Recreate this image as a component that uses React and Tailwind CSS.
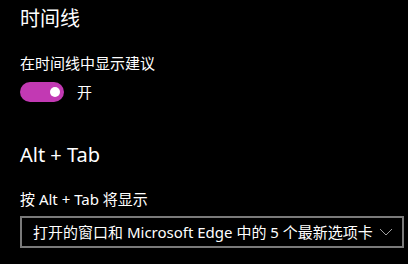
import React from 'react'

const Toggle = ({ on }) => (
  <div className={`relative w-[44px] h-[20px] rounded-full ${on ? 'bg-[#c239b3]' : 'border-2 border-white'}`}>
    <div className="absolute top-[5px] right-[4px] w-[10px] h-[10px] rounded-full bg-white" />
  </div>
)

const App = () => {
  return (
    <div className="w-[408px] h-[264px] bg-black text-white px-5 overflow-hidden font-['Noto_Sans','Noto_Sans_CJK_SC',sans-serif]">
      <div className="h-[37px] flex items-center text-[20px]">时间线</div>

      <div className="mt-[15px] h-[23px] flex items-center text-[15px]">在时间线中显示建议</div>

      <div className="mt-[7px] h-[20px] flex items-center gap-[13px]">
        <Toggle on />
        <span className="text-[15px]">开</span>
      </div>

      <div className="mt-[39px] h-[27px] flex items-center text-[20px]">Alt + Tab</div>

      <div className="mt-[20px] h-[23px] flex items-center text-[15px]">按 Alt + Tab 将显示</div>

      <div className="mt-[5px] h-[32px] w-[384px] border-2 border-[#7a7a7a] flex items-center justify-between pl-[11px] pr-[9px]">
        <span className="text-[15px] whitespace-nowrap">打开的窗口和 Microsoft Edge 中的 5 个最新选项卡</span>
        <svg width="14" height="8" viewBox="0 0 14 8" fill="none" className="shrink-0">
          <path d="M1 1l6 6 6-6" stroke="#a0a0a0" strokeWidth="1" />
        </svg>
      </div>
    </div>
  )
}

export default App
